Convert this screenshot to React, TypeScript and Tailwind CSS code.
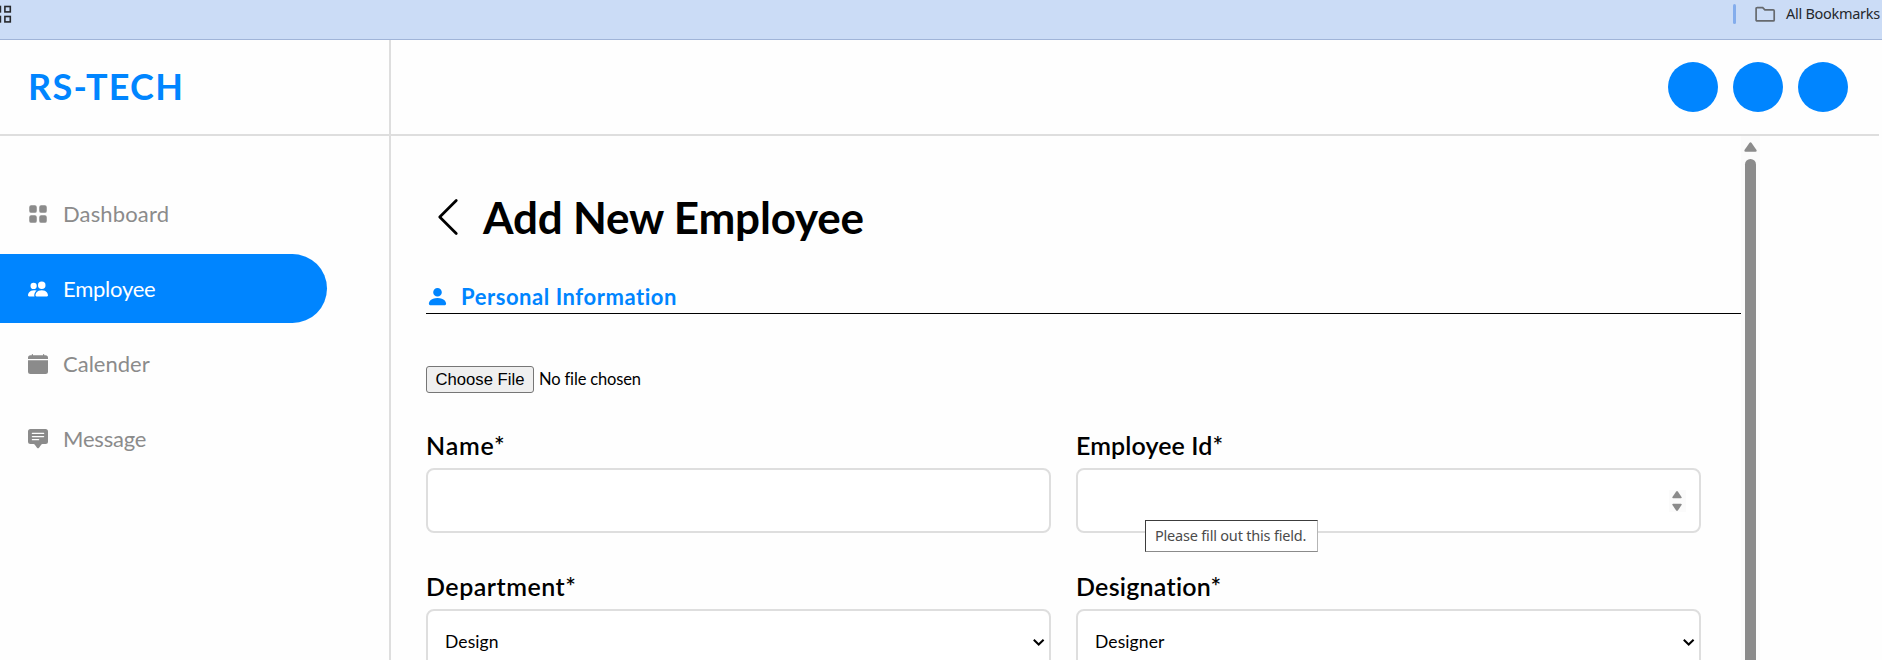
import type { ReactNode } from "react";
import { BsGridFill, BsPeopleFill, BsFillCalendarFill, BsFillChatSquareTextFill, BsPersonFill, BsChevronLeft } from "react-icons/bs";

const nav = [
  { label: "Dashboard", icon: <BsGridFill size={20} />, tracking: "tracking-[0.15px]" },
  { label: "Employee", icon: <BsPeopleFill size={20} />, tracking: "tracking-[-0.25px]", active: true },
  { label: "Calender", icon: <BsFillCalendarFill size={20} />, tracking: "tracking-[0px]" },
  { label: "Message", icon: <BsFillChatSquareTextFill size={20} />, tracking: "tracking-[-0.2px]" },
];

function Field({ label, tracking, children }: { label: string; tracking: string; children?: ReactNode }) {
  return (
    <div className="w-[625px]">
      <div className={`flex h-[36px] items-center pb-[2px] text-[25px] font-semibold leading-[34px] ${tracking}`}>
        <span>{label}</span>
      </div>
      <div className="mt-1 flex h-[65px] items-center rounded-[8px] border-2 border-[#dedede] bg-white">{children}</div>
    </div>
  );
}

function SelectValue({ value }: { value: string }) {
  return (
    <>
      <span className="ml-[17px] pt-[2px] text-[17.5px] tracking-[0.1px]">{value}</span>
      <svg className="ml-auto mr-[4px] mt-[2px]" width="13" height="9" viewBox="0 0 13 9" fill="none">
        <path d="M1.8 1.7 6.7 6.5 11.6 1.7" stroke="#000" strokeWidth="2" />
      </svg>
    </>
  );
}

export default function App() {
  return (
    <div className="relative flex h-[660px] w-[1882px] flex-col overflow-hidden bg-[#fefefe] font-['Lato','Liberation_Sans',sans-serif] text-black">
      <div className="flex h-[40px] shrink-0 items-start border-b border-[#a0b4d8] bg-[#cbdcf6]">
        <svg className="mt-[5px]" width="12" height="19" viewBox="0 0 12 19" fill="none" stroke="#27292d" strokeWidth="1.6">
          <rect x="-5" y="1.5" width="5.4" height="5.4" />
          <rect x="4.9" y="1.5" width="5.4" height="5.4" />
          <rect x="-5" y="11.5" width="5.4" height="5.4" />
          <rect x="4.9" y="11.5" width="5.4" height="5.4" />
        </svg>
        <div className="ml-auto mt-1 h-5 w-[3px] rounded-full bg-[#84adec]" />
        <svg className="ml-[19px] mt-[6px]" width="21" height="17" viewBox="0 0 21 17" fill="none" stroke="#66696e" strokeWidth="1.7">
          <path d="M2 1.6h5.7l2.2 2.3h8.3q1 0 1 1v9q0 1-1 1H2.1q-1 0-1-1V2.6q0-1 1-1Z" />
        </svg>
        <span className="ml-[10px] mr-[2px] mt-[2px] w-[94px] whitespace-nowrap font-['Noto_Sans',sans-serif] text-[14.5px] leading-[22px] tracking-[-0.28px] text-[#25282c]">All Bookmarks</span>
      </div>

      <header className="mr-[3px] flex h-[96px] shrink-0 border-b-2 border-[#dedede]">
        <div className="flex w-[391px] items-center border-r-2 border-[#dedede] pb-[2px] pl-[28px]">
          <h1 className="text-[36px] font-bold tracking-[1.25px] text-[#0085ff]">RS-TECH</h1>
        </div>
        <div className="ml-auto mr-[31px] flex items-center gap-[15px]">
          <div className="size-[50px] rounded-full bg-[#0085ff]" />
          <div className="size-[50px] rounded-full bg-[#0085ff]" />
          <div className="size-[50px] rounded-full bg-[#0085ff]" />
        </div>
      </header>

      <div className="flex min-h-0 flex-1">
        <nav className="flex w-[391px] shrink-0 flex-col gap-[6px] border-r-2 border-[#dedede] pt-[43px]">
          {nav.map((n) => (
            <div
              key={n.label}
              className={`flex h-[69px] w-[327px] shrink-0 items-center gap-[15px] rounded-r-full pl-[28px] text-[22px] font-normal ${n.active ? "bg-[#0085ff] text-white" : "text-[#8b8b8b]"}`}
            >
              {n.icon}
              <span className={n.tracking}>{n.label}</span>
            </div>
          ))}
        </nav>

        <main className="w-[1350px] shrink-0 overflow-hidden pl-[35px]">
          <div className="flex h-[116px] items-center pt-[46px]">
            <BsChevronLeft size={44} />
            <h2 className="ml-[13px] whitespace-nowrap text-[44px] font-bold leading-[60px] tracking-[-0.18px]">Add New Employee</h2>
          </div>
          <div className="mt-[28px] flex h-[34px] items-center border-b border-black text-[#0085ff]">
            <BsPersonFill size={23} />
            <h3 className="ml-[12px] text-[22px] font-bold tracking-[0.55px]">Personal Information</h3>
          </div>
          <div className="mt-[52px] flex h-[27px] items-center">
            <button className="h-[27px] w-[108px] rounded-[3px] border border-[#767676] bg-[#efefef] font-['Liberation_Sans',sans-serif] text-[16.67px] leading-[24px]">Choose File</button>
            <span className="ml-[5px] pb-px text-[16.5px] tracking-[-0.15px]">No file chosen</span>
          </div>
          <div className="mt-[35px] flex flex-wrap gap-x-[25px] gap-y-[36px]">
            <Field label="Name*" tracking="tracking-[0.8px]" />
            <Field label="Employee Id*" tracking="tracking-[0.1px]">
              <div className="ml-auto mr-[13px] flex h-[22px] w-[17px] items-center justify-center bg-[#fbfbfb]">
                <svg width="11" height="22" viewBox="0 0 11 22" fill="#8b8b8b">
                  <path d="M0.3 7.2 4 1.7Q5 .4 6 1.7L9.7 7.2Q10 8.2 8.8 8.2H1.2Q0 8.2.3 7.2Z" />
                  <path d="M0.3 14.8 4 20.3Q5 21.6 6 20.3L9.7 14.8Q10 13.8 8.8 13.8H1.2Q0 13.8.3 14.8Z" />
                </svg>
              </div>
            </Field>
            <Field label="Department*" tracking="tracking-[0.5px]">
              <SelectValue value="Design" />
            </Field>
            <Field label="Designation*" tracking="tracking-[0.25px]">
              <SelectValue value="Designer" />
            </Field>
          </div>
        </main>

        <div className="flex w-[19px] shrink-0 flex-col items-center bg-[#fbfbfb] pt-[6px]">
          <svg width="13" height="10" viewBox="0 0 13 10" fill="#8b8b8b">
            <path d="M.5 8 5.4 1Q6.5-.4 7.6 1L12.5 8Q13 9.7 11.5 9.7H1.5Q0 9.7.5 8Z" />
          </svg>
          <div className="mt-[7px] w-[11px] flex-1 rounded-t-full bg-[#8b8b8b]" />
        </div>
      </div>

      <div className="absolute left-[1145px] top-[520px] flex h-[32px] w-[173px] items-center border border-b-[#8b8b8b] border-l-[#3c3c3c] border-r-[#b5b5b5] border-t-[#3c3c3c] bg-white pl-[9px] font-['Noto_Sans',sans-serif] text-[14.5px] tracking-[-0.2px] text-[#4b4b4b]">
        <span className="whitespace-nowrap">Please fill out this field.</span>
      </div>
    </div>
  );
}
